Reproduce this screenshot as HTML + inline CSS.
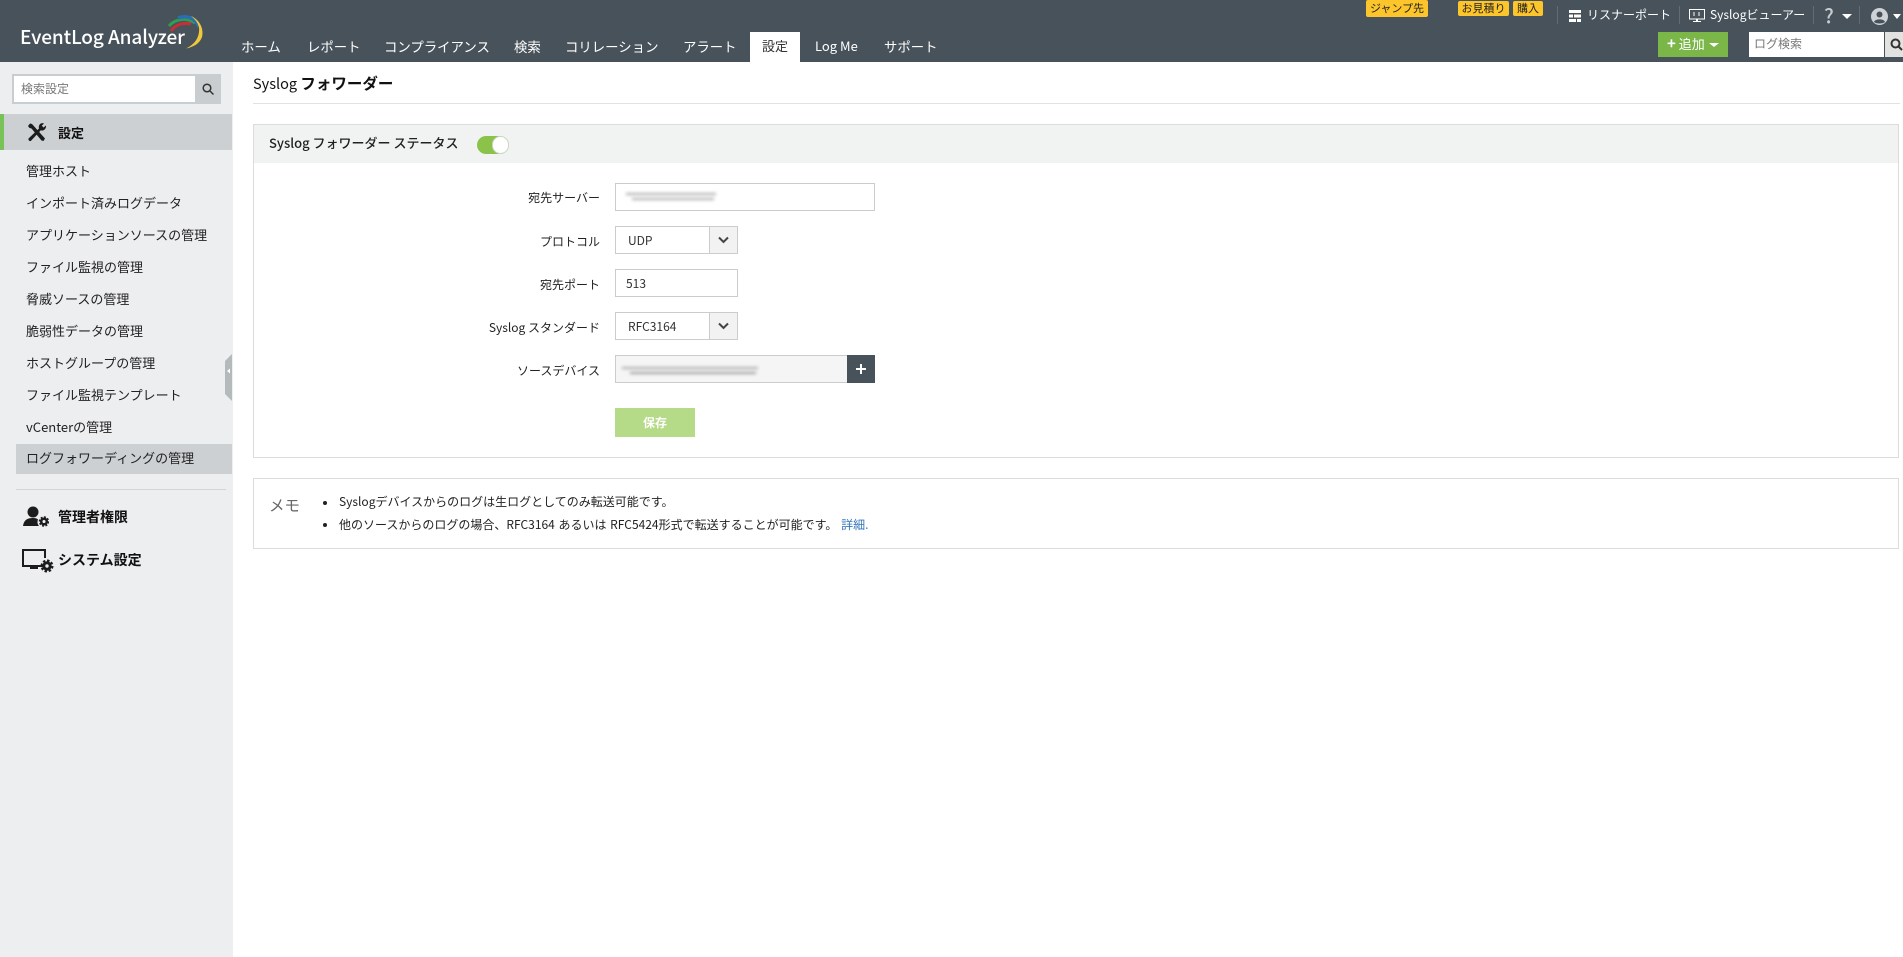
<!DOCTYPE html>
<html lang="ja">
<head>
<meta charset="utf-8">
<title>Syslog フォワーダー</title>
<style>
html,body{margin:0;padding:0;width:1903px;height:957px;overflow:hidden;background:#fff}
body{position:relative;font-family:"Noto Sans CJK JP","Liberation Sans",sans-serif;font-size:13px;color:#222}
.a{position:absolute;white-space:nowrap}
.t{position:absolute;white-space:nowrap;line-height:20px;height:20px}
.n{color:#fff;font-size:13.4px;top:36px}
.b{position:absolute;background:#fcc52c;color:#222;font-size:11px;line-height:15px;text-align:center;border-radius:2px}
.d{position:absolute;width:1px;background:#626c74;top:6px;height:18px}
.s{left:26px;font-size:13px;color:#222}
.h{font-size:13px;font-weight:700;color:#111}
.l{font-size:12px;color:#222;right:1303px;text-align:right}
.i{position:absolute;box-sizing:border-box;border:1px solid #ccc;background:#fff;font-size:12px;line-height:27px;padding-left:10px;color:#333}
.sb{position:absolute;box-sizing:border-box;border:1px solid #ccc;background:#f2f2f2;width:29px}
.g{position:absolute;background:#a9a9a9;filter:blur(1.5px)}
</style>
</head>
<body>
<!-- header -->
<div class="a" style="left:0;top:0;width:1903px;height:62px;background:#47525b"></div>
<div class="t" style="left:20px;top:25px;color:#fff;font-size:19px;font-weight:500;height:24px;line-height:24px;letter-spacing:-.1px">EventLog Analyzer</div>
<svg class="a" style="left:166px;top:14px" width="40" height="36" viewBox="0 0 40 36" fill="none">
<path d="M5 17C9 11 17 8 25 10" stroke="#c62f35" stroke-width="3"/>
<path d="M3 12C9 5 20 3 29 9" stroke="#2e9e4f" stroke-width="3"/>
<path d="M12 4C20 1 29 3 33 13" stroke="#2a6db5" stroke-width="3.500"/>
<path d="M25 2C34 6 38 15 36 23C34 29 28 33 20 34.500C27 31 32 26 33 18C34 12 31 7 25 2Z" fill="#f0c93a"/>
</svg>
<span class="t n" style="left:241px">ホーム</span>
<span class="t n" style="left:307px">レポート</span>
<span class="t n" style="left:384px">コンプライアンス</span>
<span class="t n" style="left:514px">検索</span>
<span class="t n" style="left:565px">コリレーション</span>
<span class="t n" style="left:683px">アラート</span>
<div class="a" style="left:750px;top:32px;width:50px;height:30px;background:#fff"></div>
<span class="t n" style="left:762px;color:#333;font-size:13px">設定</span>
<span class="t n" style="left:815px;font-size:13px">Log Me</span>
<span class="t n" style="left:884px">サポート</span>

<div class="b" style="left:1366px;top:0;width:62px;height:17px;line-height:16px">ジャンプ先</div>
<div class="b" style="left:1458px;top:1px;width:51px;height:15px">お見積り</div>
<div class="b" style="left:1513px;top:1px;width:30px;height:15px">購入</div>
<div class="d" style="left:1557px"></div>
<div class="d" style="left:1679px"></div>
<div class="d" style="left:1813px"></div>
<div class="d" style="left:1859px"></div>
<svg class="a" style="left:1569px;top:10px" width="12" height="12" viewBox="0 0 12 12" fill="#fff"><path d="M0 0H12V3H0ZM0 4.500H4V7.500H0ZM5 4.500H12V7.500H5ZM0 9H7V12H0ZM8 9H12V12H8Z"/></svg>
<span class="t" style="left:1587px;top:5px;color:#fff;font-size:12px">リスナーポート</span>
<svg class="a" style="left:1689px;top:9px" width="16" height="14" viewBox="0 0 16 14" fill="none"><rect x=".5" y=".5" width="15" height="9.500" stroke="#fff"/><path d="M4 13H12V12H9V10H7V12H4Z" fill="#fff"/><path d="M5 3V7M10 3V7" stroke="#fff"/></svg>
<span class="t" style="left:1710px;top:5px;color:#fff;font-size:12px">Syslogビューアー</span>
<span class="t" style="left:1824px;top:5px;color:#c8ccd0;font-size:20px;font-weight:500">?</span>
<div class="a" style="left:1842px;top:14px;border:5px solid transparent;border-top:5px solid #fff;border-bottom:0"></div>
<svg class="a" style="left:1871px;top:8px" width="17" height="17" viewBox="0 0 17 17"><circle cx="8.500" cy="8.500" r="8.500" fill="#d0d3d6"/><circle cx="8.500" cy="6.500" r="3" fill="#47525b"/><path d="M3 14C4 10.500 13 10.500 14 14C12 16 5 16 3 14Z" fill="#47525b"/></svg>
<div class="a" style="left:1893px;top:14px;border:4px solid transparent;border-top:5px solid #fff;border-bottom:0"></div>

<div class="a" style="left:1658px;top:32px;width:70px;height:25px;background:#7ab648"></div>
<span class="t" style="left:1667px;top:34px;color:#fff;font-size:13px"><span style="font-size:15px;font-weight:700">+</span> 追加</span>
<div class="a" style="left:1709px;top:43px;border:5px solid transparent;border-top:4px solid #fff;border-bottom:0"></div>
<div class="a" style="left:1749px;top:32px;width:135px;height:25px;background:#fff"></div>
<span class="t" style="left:1754px;top:34px;color:#777;font-size:12px">ログ検索</span>
<div class="a" style="left:1885px;top:32px;width:18px;height:25px;background:#e2e2e0"></div>
<svg class="a" style="left:1890px;top:38px" width="13" height="13" viewBox="0 0 13 13" fill="none" stroke="#333" stroke-width="2"><circle cx="5.500" cy="5.500" r="4"/><path d="M8.500 8.500L12 12"/></svg>

<!-- sidebar -->
<div class="a" style="left:0;top:62px;width:233px;height:895px;background:#edeef0"></div>
<div class="a" style="left:12px;top:74px;width:209px;height:30px;background:#c9cdd0"></div>
<div class="a" style="left:14px;top:76px;width:181px;height:26px;background:#fff"></div>
<span class="t" style="left:21px;top:79px;color:#777;font-size:12px">検索設定</span>
<svg class="a" style="left:202px;top:83px" width="12" height="12" viewBox="0 0 12 12" fill="none" stroke="#333" stroke-width="1.500"><circle cx="5" cy="5" r="3.800"/><path d="M8 8L11.500 11.500"/></svg>

<div class="a" style="left:0;top:114px;width:232px;height:36px;background:#ccd0d2"></div>
<div class="a" style="left:0;top:114px;width:4px;height:36px;background:#78c257"></div>
<svg class="a" style="left:27px;top:122px" width="20" height="20" viewBox="0 0 20 20" fill="#1c1c1c"><path d="M1 4L3 1.500L5 2L18 16.500L16.500 19L14.500 18.500L4.500 6.500L2.500 6Z"/><path d="M12 6.500C11 3 14 0 17 1.500L14.800 3.800L16.500 5.500L19 3.500C19.500 7 16 9.500 13.800 8.300L3.800 19C2.500 19.500 1 18 1.500 16.500L12 6.500Z"/></svg>
<span class="t h" style="left:58px;top:123px">設定</span>

<span class="t s" style="top:161px">管理ホスト</span>
<span class="t s" style="top:193px">インポート済みログデータ</span>
<span class="t s" style="top:225px">アプリケーションソースの管理</span>
<span class="t s" style="top:257px">ファイル監視の管理</span>
<span class="t s" style="top:289px">脅威ソースの管理</span>
<span class="t s" style="top:321px">脆弱性データの管理</span>
<span class="t s" style="top:353px">ホストグループの管理</span>
<span class="t s" style="top:385px">ファイル監視テンプレート</span>
<span class="t s" style="top:417px">vCenterの管理</span>
<div class="a" style="left:16px;top:444px;width:216px;height:30px;background:#ccd0d2"></div>
<span class="t s" style="top:448px">ログフォワーディングの管理</span>
<div class="a" style="left:16px;top:489px;width:210px;height:1px;background:#d2d4d6"></div>

<svg class="a" style="left:225px;top:354px" width="7" height="47" viewBox="0 0 7 47"><path d="M7 0V47L0 40V7Z" fill="#b4b9bc"/><path d="M2 17L5 14.500V19.500Z" fill="#fff"/></svg>

<svg class="a" style="left:23px;top:506px" width="26" height="22" viewBox="0 0 26 22" fill="#1c1c1c"><circle cx="10" cy="6" r="5.500"/><path d="M0 20C1 14 4 12 10 12C13 12 14 12.500 15 13.500C14 16 14.500 18 16 20Z"/><circle cx="21" cy="15.500" r="2.800" fill="none" stroke="#1c1c1c" stroke-width="2.500"/><circle cx="21" cy="15.500" r="4.500" fill="none" stroke="#1c1c1c" stroke-width="1.500" stroke-dasharray="2 1.500"/></svg>
<span class="t h" style="left:58px;top:507px;font-size:14px">管理者権限</span>
<svg class="a" style="left:22px;top:549px" width="32" height="24" viewBox="0 0 32 24" fill="none"><path d="M23 17H1V1H23V9" stroke="#1c1c1c" stroke-width="2"/><path d="M8 20H16V18H8Z" fill="#1c1c1c"/><circle cx="25" cy="17" r="3.200" stroke="#1c1c1c" stroke-width="3"/><circle cx="25" cy="17" r="5.500" stroke="#1c1c1c" stroke-width="2" stroke-dasharray="2.500 1.800"/></svg>
<span class="t h" style="left:58px;top:550px;font-size:14px">システム設定</span>

<!-- title -->
<span class="t" style="left:253px;top:73px;font-size:14.5px;color:#111">Syslog <span style="font-weight:700;font-size:15.5px">フォワーダー</span></span>
<div class="a" style="left:253px;top:103px;width:1647px;height:1px;background:#e2e2e2"></div>

<!-- card -->
<div class="a" style="left:253px;top:124px;width:1646px;height:334px;box-sizing:border-box;border:1px solid #dcdcdc"></div>
<div class="a" style="left:254px;top:125px;width:1644px;height:38px;background:#f1f3f3"></div>
<span class="t" style="left:269px;top:133px;font-size:13px;font-weight:500;color:#222">Syslog フォワーダー ステータス</span>
<div class="a" style="left:477px;top:136px;width:32px;height:18px;border-radius:9px;background:#8bc34a"></div>
<div class="a" style="left:492px;top:136px;width:17px;height:18px;box-sizing:border-box;border-radius:9px;background:#fff;border:1px solid #cfd8c4"></div>

<span class="t l" style="top:188px">宛先サーバー</span>
<div class="i" style="left:615px;top:183px;width:260px;height:28px"></div>
<div class="g" style="left:626px;top:193px;width:90px;height:2px"></div>
<div class="g" style="left:632px;top:198px;width:82px;height:2px"></div>

<span class="t l" style="top:232px">プロトコル</span>
<div class="i" style="left:615px;top:226px;width:123px;height:28px;padding-left:12px">UDP</div>
<div class="sb" style="left:709px;top:226px;height:28px"></div>
<svg class="a" style="left:718px;top:236px" width="11" height="8" viewBox="0 0 11 8" fill="none" stroke="#444" stroke-width="2"><path d="M1 1.500L5.500 6L10 1.500"/></svg>

<span class="t l" style="top:275px">宛先ポート</span>
<div class="i" style="left:615px;top:269px;width:123px;height:28px">513</div>

<span class="t l" style="top:318px">Syslog スタンダード</span>
<div class="i" style="left:615px;top:312px;width:123px;height:28px;padding-left:12px">RFC3164</div>
<div class="sb" style="left:709px;top:312px;height:28px"></div>
<svg class="a" style="left:718px;top:322px" width="11" height="8" viewBox="0 0 11 8" fill="none" stroke="#444" stroke-width="2"><path d="M1 1.500L5.500 6L10 1.500"/></svg>

<span class="t l" style="top:361px">ソースデバイス</span>
<div class="i" style="left:615px;top:355px;width:233px;height:28px;background:#f5f5f5"></div>
<div class="g" style="left:622px;top:367px;width:136px;height:2px"></div>
<div class="g" style="left:630px;top:372px;width:126px;height:2px;background:#999"></div>
<div class="a" style="left:847px;top:355px;width:28px;height:28px;background:#47525b"></div>
<div class="a" style="left:856px;top:368px;width:10px;height:2px;background:#fff"></div>
<div class="a" style="left:860px;top:364px;width:2px;height:10px;background:#fff"></div>

<div class="a" style="left:615px;top:408px;width:80px;height:29px;background:#b5da88;color:#fff;font-size:12px;font-weight:700;line-height:29px;text-align:center">保存</div>

<!-- memo -->
<div class="a" style="left:253px;top:478px;width:1646px;height:71px;box-sizing:border-box;border:1px solid #dcdcdc"></div>
<span class="t" style="left:269px;top:495px;font-size:15.5px;color:#666">メモ</span>
<div class="a" style="left:323px;top:501px;width:4px;height:4px;border-radius:50%;background:#222"></div>
<span class="t" style="left:339px;top:492px;font-size:12px;color:#222">Syslogデバイスからのログは生ログとしてのみ転送可能です。</span>
<div class="a" style="left:323px;top:523px;width:4px;height:4px;border-radius:50%;background:#222"></div>
<span class="t" style="left:339px;top:515px;font-size:12px;color:#222;word-spacing:1px">他のソースからのログの場合、RFC3164 あるいは RFC5424形式で転送することが可能です。 <span style="color:#3577b8">詳細.</span></span>
</body>
</html>
